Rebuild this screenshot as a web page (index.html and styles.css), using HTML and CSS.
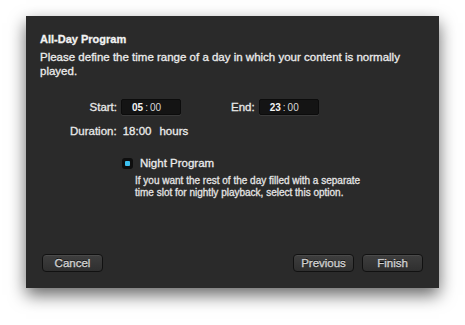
FILE: index.html
```html
<!DOCTYPE html>
<html lang="en">
  <head>
    <meta charset="UTF-8" />
    <title>All-Day Program</title>
    <link rel="stylesheet" href="styles.css">
  </head>
  <body>
    <div class="sheet">
      <h1 class="title">All-Day Program</h1>
      <p class="intro">
        Please define the time range of a day in which your content is normally
        played.
      </p>

      <div class="times">
        <label class="label start-label">Start:</label>
        <div class="field"><b>05</b><span class="colon">:</span>00</div>
        <label class="label end-label">End:</label>
        <div class="field"><b>23</b><span class="colon">:</span>00</div>
      </div>
      <div class="duration">
        <span class="label">Duration:</span>
        <span class="value">18:00</span>
        <span class="value">hours</span>
      </div>

      <div class="night">
        <span class="check"><span class="dot"></span></span>
        <div>
          <div class="night-title">Night Program</div>
          <p class="night-text">
            If you want the rest of the day filled with a separate<br />
            time slot for nightly playback, select this option.
          </p>
        </div>
      </div>

      <div class="buttons">
        <button class="btn">Cancel</button>
        <div class="right">
          <button class="btn">Previous</button>
          <button class="btn">Finish</button>
        </div>
      </div>
    </div>
  </body>
</html>
```

FILE: styles.css
```css
body {
  margin: 0;
  height: 325px;
  background: #fff;
  font-family: "Liberation Sans", Arial, sans-serif;
  color: #e6e6e6;
  -webkit-text-stroke: 0.3px;
}
.sheet {
  margin: 16px 0 0 26px;
  width: 413px;
  height: 272px;
  box-sizing: border-box;
  padding: 17px 14px 0 14px;
  background: #2a2a2a;
  box-shadow: 0 7px 16px rgba(0, 0, 0, 0.6);
  display: flex;
  flex-direction: column;
}
.title {
  margin: 0;
  font-size: 11px;
  font-weight: bold;
  color: #f2f2f2;
}
.intro {
  margin: 5px 0 0 0;
  font-size: 11.5px;
  line-height: 14px;
  color: #ececec;
}
.times {
  display: flex;
  align-items: center;
  margin-top: 21px;
}
.label {
  font-size: 11.5px;
  color: #e8e8e8;
}
.start-label {
  width: 77px;
  text-align: right;
  margin-right: 4px;
}
.end-label {
  margin: 0 4px 0 50px;
}
.field {
  width: 60px;
  height: 16px;
  box-sizing: border-box;
  padding: 2px 0 0 10px;
  background: #141414;
  border: 1px solid #0c0c0c;
  border-radius: 2px;
  box-shadow: 0 1px 0 #3a3a3a;
  font-size: 10px;
  color: #d8d8d8;
  -webkit-text-stroke: 0;
}
.field b {
  color: #f4f4f4;
}
.colon {
  margin: 0 2px;
}
.duration {
  display: flex;
  align-items: center;
  margin: 10px 0 0 30px;
}
.duration .value {
  font-size: 11.5px;
  margin-left: 6px;
  color: #ececec;
}
.duration .value + .value {
  margin-left: 8px;
}
.night {
  display: flex;
  align-items: flex-start;
  margin: 20px 0 0 82px;
}
.check {
  width: 11px;
  height: 11px;
  margin-right: 7px;
  margin-top: 1px;
  background: #0e0e0e;
  border-radius: 3px;
  display: flex;
  align-items: center;
  justify-content: center;
}
.dot {
  width: 5px;
  height: 5px;
  background: #3cc0f0;
  border-radius: 1px;
}
.night-title {
  font-size: 11.5px;
  color: #ececec;
}
.night-text {
  margin: 6px 0 0 -5px;
  font-size: 10px;
  line-height: 12px;
  color: #e4e4e4;
}
.buttons {
  display: flex;
  justify-content: space-between;
  margin-top: auto;
  margin-bottom: 16px;
  padding: 0 2px;
}
.right {
  display: flex;
  gap: 8px;
}
.btn {
  width: 61px;
  height: 18px;
  padding: 0;
  border: 1px solid #111;
  border-radius: 4px;
  background: linear-gradient(#3e3e3e, #2f2f2f);
  box-shadow: inset 0 1px 0 #4a4a4a;
  font-family: "Liberation Sans", Arial, sans-serif;
  font-size: 11.5px;
  color: #cfcfcf;
  -webkit-text-stroke: 0.35px;
  text-shadow: 0 -1px 0 #000;
}
```
